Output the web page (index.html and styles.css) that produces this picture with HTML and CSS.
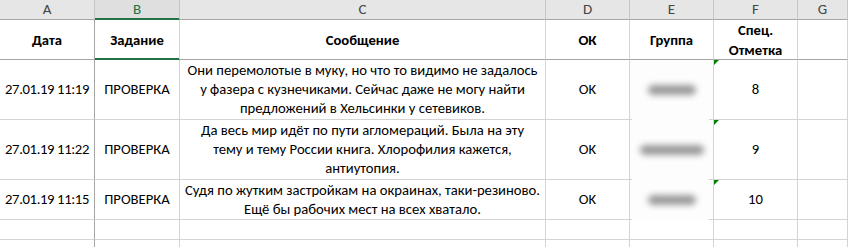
FILE: index.html
```html
<!DOCTYPE html>
<html lang="ru">
<head>
<meta charset="utf-8">
<title>Лист</title>
<link rel="stylesheet" href="styles.css">
</head>
<body>
<div class="sheet">
  <div class="ch">A</div>
  <div class="ch sel">B</div>
  <div class="ch">C</div>
  <div class="ch">D</div>
  <div class="ch">E</div>
  <div class="ch">F</div>
  <div class="ch">G</div>

  <div class="c h cola">Дата</div>
  <div class="c h selb">Задание</div>
  <div class="c h">Сообщение</div>
  <div class="c h">ОК</div>
  <div class="c h">Группа</div>
  <div class="c h">Спец.<br>Отметка</div>
  <div class="c h"></div>

  <div class="c cola date">27.01.19 11:19</div>
  <div class="c">ПРОВЕРКА</div>
  <div class="c">Они перемолотые в муку, но что то видимо не задалось<br>у фазера с кузнечиками. Сейчас даже не могу найти<br>предложений в Хельсинки у сетевиков.</div>
  <div class="c">OK</div>
  <div class="c grp"><span class="blob"></span></div>
  <div class="c mark">8</div>
  <div class="c"></div>

  <div class="c cola date">27.01.19 11:22</div>
  <div class="c">ПРОВЕРКА</div>
  <div class="c">Да весь мир идёт по пути агломераций. Была на эту<br>тему и тему России книга. Хлорофилия кажется,<br>антиутопия.</div>
  <div class="c">OK</div>
  <div class="c grp"><span class="blob wide"></span></div>
  <div class="c mark">9</div>
  <div class="c"></div>

  <div class="c cola date">27.01.19 11:15</div>
  <div class="c">ПРОВЕРКА</div>
  <div class="c">Судя по жутким застройкам на окраинах, таки-резиново.<br>Ещё бы рабочих мест на всех хватало.</div>
  <div class="c">OK</div>
  <div class="c grp"><span class="blob"></span></div>
  <div class="c mark">10</div>
  <div class="c"></div>

  <div class="c cola"></div>
  <div class="c"></div>
  <div class="c"></div>
  <div class="c"></div>
  <div class="c"></div>
  <div class="c"></div>
  <div class="c"></div>

  <div class="c cola"></div>
  <div class="c"></div>
  <div class="c"></div>
  <div class="c"></div>
  <div class="c"></div>
  <div class="c"></div>
  <div class="c"></div>
</div>
</body>
</html>
```
FILE: styles.css
```css
html, body {
  margin: 0;
  padding: 0;
  background: #ffffff;
}

body {
  font-family: Carlito, Lato, "Open Sans", "Liberation Sans", sans-serif;
  font-size: 14.667px;
  color: #000000;
}

.sheet {
  display: grid;
  grid-template-columns: 95px 85px 366px 84px 84px 84px 1fr;
  grid-template-rows: 20px 40px 60px 60px 40px 20px 20px;
  width: 848px;
  height: 247px;
  overflow: hidden;
}

.ch,
.c {
  box-sizing: border-box;
  display: flex;
  align-items: center;
  justify-content: center;
  text-align: center;
  white-space: nowrap;
}

.ch {
  background: #e6e6e6;
  color: #444444;
  border-right: 1px solid #c6c6c6;
  border-bottom: 1px solid #a6a6a6;
  line-height: 19px;
  font-size: 15px;
}

.ch.sel {
  background: #dfdfdf;
  color: #217346;
  border-bottom-color: #217346;
  box-shadow: inset 0 -1px 0 #217346;
}

.c {
  border-right: 1px solid #d4d4d4;
  border-bottom: 1px solid #d4d4d4;
  line-height: 19px;
}

.h {
  font-weight: bold;
  line-height: 20px;
  border-bottom-color: #a6a6a6;
}

.h.selb {
  border-bottom-color: #217346;
  box-shadow: inset 0 -1px 0 #217346;
}

.cola {
  border-right-color: #a6a6a6;
}

.date {
  letter-spacing: -0.35px;
}

.grp {
  border-bottom-color: transparent;
  background-color: #fdfdfd;
  background-image:
    linear-gradient(#d4d4d4, #d4d4d4),
    linear-gradient(#d4d4d4, #d4d4d4);
  background-size: 2px 1px, 5px 1px;
  background-position: left bottom, right bottom;
  background-repeat: no-repeat;
  background-origin: border-box;
}

.blob {
  display: block;
  width: 48px;
  height: 10px;
  border-radius: 5px;
  background: #9a9a9a;
  filter: blur(3px);
}

.blob.wide {
  width: 64px;
}

.mark {
  position: relative;
}

.mark::before {
  content: "";
  position: absolute;
  left: 0;
  top: 0;
  width: 0;
  height: 0;
  border-top: 5px solid #008000;
  border-right: 5px solid transparent;
}
```
